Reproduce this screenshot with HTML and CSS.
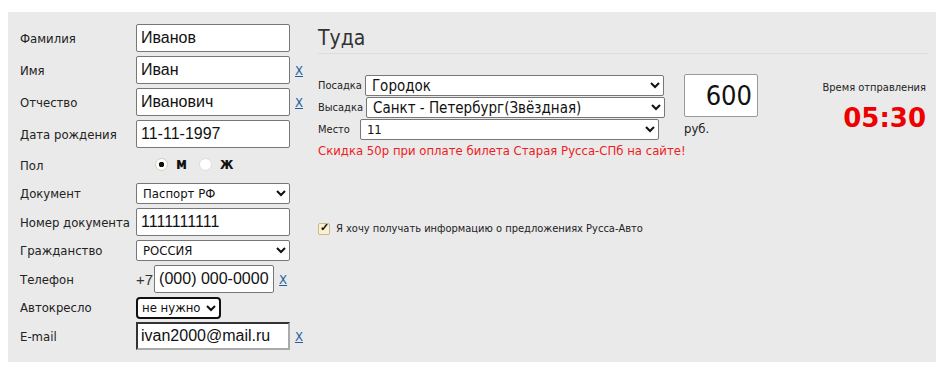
FILE: index.html
```html
<!DOCTYPE html>
<html lang="ru">
<head>
  <meta charset="UTF-8" />
  <title>Бронирование билета</title>
  <link rel="stylesheet" href="styles.css">
</head>
<body>

  <div class="panel">
    <form class="person">
      <div class="row">
        <label>Фамилия</label>
        <input type="text" class="field" value="Иванов">
      </div>
      <div class="row">
        <label>Имя</label>
        <input type="text" class="field" value="Иван">
        <a href="#" class="clear">X</a>
      </div>
      <div class="row">
        <label>Отчество</label>
        <input type="text" class="field" value="Иванович">
        <a href="#" class="clear">X</a>
      </div>
      <div class="row">
        <label>Дата рождения</label>
        <input type="text" class="field" value="11-11-1997">
      </div>
      <div class="row row-sex">
        <label>Пол</label>
        <span class="sex">
          <input type="radio" name="sex" checked><b>м</b>
          <input type="radio" name="sex"><b>ж</b>
        </span>
      </div>
      <div class="row row-select">
        <label>Документ</label>
        <select class="choice">
          <option>Паспорт РФ</option>
        </select>
      </div>
      <div class="row">
        <label>Номер документа</label>
        <input type="text" class="field" value="1111111111">
      </div>
      <div class="row row-select">
        <label>Гражданство</label>
        <select class="choice">
          <option>РОССИЯ</option>
        </select>
      </div>
      <div class="row">
        <label>Телефон</label>
        <span class="prefix">+7</span>
        <input type="text" class="field phone" value="(000) 000-0000">
        <a href="#" class="clear">X</a>
      </div>
      <div class="row row-select">
        <label>Автокресло</label>
        <select class="choice seat-child">
          <option>не нужно</option>
        </select>
      </div>
      <div class="row">
        <label>E-mail</label>
        <input type="text" class="field email" value="ivan2000@mail.ru">
        <a href="#" class="clear">X</a>
      </div>
    </form>

    <div class="trip">
      <h2>Туда</h2>
      <div class="trip-main">
        <div class="route">
          <div class="stop">
            <label>Посадка</label>
            <select class="stop-select">
              <option>Городок</option>
            </select>
          </div>
          <div class="stop">
            <label>Высадка</label>
            <select class="stop-select">
              <option>Санкт - Петербург(Звёздная)</option>
            </select>
          </div>
          <div class="stop">
            <label class="seat-label">Место</label>
            <select class="stop-select seat-select">
              <option>11</option>
            </select>
          </div>
          <p class="promo">Скидка 50р при оплате билета Старая Русса-СПб на сайте!</p>
        </div>
        <div class="price">
          <input type="text" value="600">
          <span>руб.</span>
        </div>
        <div class="depart">
          <div class="depart-title">Время отправления</div>
          <div class="depart-time">05:30</div>
        </div>
      </div>
      <label class="subscribe">
        <input type="checkbox" checked>
        Я хочу получать информацию о предложениях Русса-Авто
      </label>
    </div>
  </div>

</body>
</html>
```

FILE: styles.css
```css
* {
  box-sizing: border-box;
}
body {
  margin: 12px 8px 8px;
  background: #fff;
  color: #222;
  font-family: "DejaVu Sans Condensed", Tahoma, "Liberation Sans", sans-serif;
  font-size: 13px;
}
.panel {
  display: flex;
  width: 928px;
  height: 350px;
  padding: 12px 8px 11px 12px;
  background: #eaeaea;
}
.person {
  width: 296px;
  flex-shrink: 0;
}
.row {
  display: flex;
  align-items: center;
  height: 28px;
  margin-bottom: 4px;
}
.row label {
  width: 116px;
  flex-shrink: 0;
}
.row-select {
  height: 21px;
}
.row-sex {
  height: 27px;
}
.field {
  width: 154px;
  height: 28px;
  padding: 0 4px;
  border: 1px solid #777;
  border-radius: 2px;
  background: #fff;
  font-family: "Liberation Sans", Arial, sans-serif;
  font-size: 16px;
  color: #111;
}
.phone {
  width: 120px;
  margin-left: 1px;
}
.prefix {
  font-size: 15px;
  font-family: "Liberation Sans", Arial, sans-serif;
  color: #333;
}
.email {
  border-width: 2px;
  border-style: solid;
  border-color: #333 #aaa #aaa #333;
  border-radius: 0;
  padding-left: 3px;
}
.clear {
  margin-left: 5px;
  color: #1f5fa0;
  font-size: 13px;
}
.sex {
  display: flex;
  align-items: center;
  margin-left: 19px;
  margin-top: -3px;
}
.sex b {
  margin: 0 12px 0 8px;
  font-size: 15px;
  color: #111;
}
.sex input {
  appearance: none;
  width: 13px;
  height: 13px;
  margin: 0;
  border: 1px solid #ddd;
  border-radius: 50%;
  background: #fff;
}
.sex input:checked {
  border-color: #d8cfb2;
  background: radial-gradient(circle, #111 0 2.5px, #fff 3px);
}
.choice {
  width: 154px;
  height: 21px;
  padding: 0 2px;
  border: 1px solid #777;
  border-radius: 2px;
  background: #fff;
  font-family: inherit;
  font-size: 13px;
  color: #111;
}
.seat-child {
  width: 85px;
  height: 22px;
  border: 2px solid #111;
  border-radius: 4px;
  padding: 0;
}
.trip {
  flex: 1;
}
.trip h2 {
  margin: 0 0 0 2px;
  padding: 2px 0 3px;
  font-weight: normal;
  font-size: 21px;
  color: #333;
  border-bottom: 1px solid #ddd;
}
.trip-main {
  display: flex;
  align-items: flex-start;
  margin-top: 21px;
}
.route {
  width: 352px;
  padding-left: 2px;
}
.stop {
  display: flex;
  align-items: center;
  margin-bottom: 1px;
}
.stop label {
  font-size: 11px;
  margin-right: 3px;
}
.stop .seat-label {
  margin-right: 10px;
}
.stop-select {
  width: 299px;
  height: 21px;
  padding: 0 2px;
  border: 1px solid #777;
  border-radius: 2px;
  background: #fff;
  font-family: inherit;
  font-size: 15px;
  color: #111;
}
.seat-select {
  font-size: 13px;
}
.promo {
  margin: 3px 0 0;
  white-space: nowrap;
  color: #ee1c24;
  font-size: 13px;
}
.price {
  display: flex;
  flex-direction: column;
  margin-left: 16px;
  margin-top: -1px;
}
.price input {
  width: 74px;
  height: 43px;
  padding: 0 5px;
  border: 1px solid #999;
  border-radius: 2px;
  background: #fff;
  text-align: right;
  font-family: "DejaVu Sans Condensed", Tahoma, sans-serif;
  font-size: 27px;
  color: #111;
}
.price span {
  margin-top: 4px;
}
.depart {
  margin-left: auto;
  padding: 6px 2px 0 0;
  text-align: right;
}
.depart-title {
  font-size: 11px;
}
.depart-time {
  margin-top: 9px;
  color: #ee0000;
  font-family: "DejaVu Sans", Verdana, sans-serif;
  font-weight: bold;
  font-size: 26px;
}
.subscribe {
  display: flex;
  align-items: center;
  margin: 64px 0 0 2px;
  font-size: 11px;
}
.subscribe input {
  appearance: none;
  position: relative;
  width: 12px;
  height: 12px;
  margin: 0 6px 0 0;
  border: 1px solid #c9b98a;
  border-radius: 2px;
  background: #fbf0cf;
}
.subscribe input:checked::after {
  content: "✓";
  position: absolute;
  left: 1px;
  top: -3px;
  font-size: 11px;
  font-weight: bold;
  color: #111;
}
```
